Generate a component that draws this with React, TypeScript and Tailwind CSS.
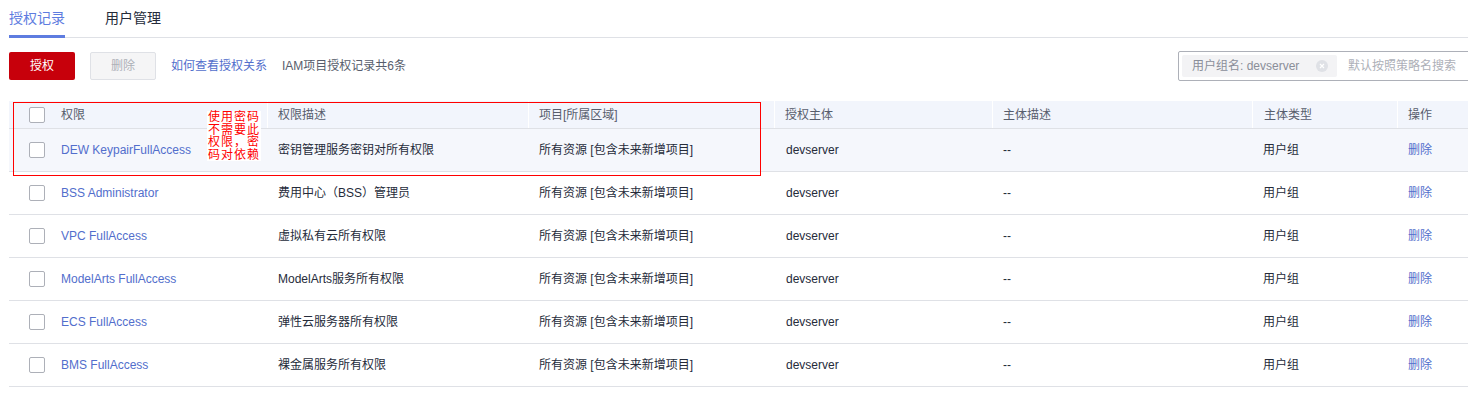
import React from "react";

const rows = [
  { name: "DEW KeypairFullAccess", desc: "密钥管理服务密钥对所有权限" },
  { name: "BSS Administrator", desc: "费用中心（BSS）管理员" },
  { name: "VPC FullAccess", desc: "虚拟私有云所有权限" },
  { name: "ModelArts FullAccess", desc: "ModelArts服务所有权限" },
  { name: "ECS FullAccess", desc: "弹性云服务器所有权限" },
  { name: "BMS FullAccess", desc: "裸金属服务所有权限" },
];

const cols = "grid grid-cols-[40px_218px_261px_246px_218px_260px_145px_1fr]";

const Checkbox = () => (
  <span className="block h-4 w-4 rounded-[2px] border border-[#adb0b8] bg-white" />
);

const App: React.FC = () => {
  return (
    <div
      className="w-full overflow-hidden bg-white"
      style={{ fontFamily: '"Liberation Sans", "Noto Sans CJK SC", sans-serif' }}
    >
      <div className="w-[1480px] pl-[9px]">
        {/* tabs */}
        <div className="flex h-[38px] border-b border-[#dfe1e6] text-[14px]">
          <div className="flex w-[56px] flex-col justify-between border-b-[3px] border-[#5e7ce0] pt-[9px] text-[#5e7ce0] -mb-px">
            <span className="leading-[18px]">授权记录</span>
          </div>
          <div className="ml-[40px] pt-[9px] leading-[18px] text-[#252b3a]">用户管理</div>
        </div>

        {/* toolbar */}
        <div className="mt-[13px] flex items-center text-[12px]">
          <button className="h-[28px] w-[66px] rounded-[2px] bg-[#c7000b] text-[12px] text-white">
            授权
          </button>
          <button className="ml-[15px] h-[28px] w-[66px] rounded-[2px] border border-[#dfe1e6] bg-[#f5f5f6] text-[12px] text-[#adb0b8]">
            删除
          </button>
          <a className="ml-[15px] text-[#526ecc]">如何查看授权关系</a>
          <span className="ml-[15px] text-[#575d6c]">IAM项目授权记录共6条</span>
          <div className="ml-auto flex h-[30px] w-[302px] items-center rounded-[2px] border border-[#adb0b8] bg-white pl-[3px]">
            <div className="flex h-[22px] w-[155px] items-center justify-between rounded-[2px] bg-[#f3f3f5] pl-[10px] pr-[9px] text-[#8a8e99]">
              <span>用户组名: devserver</span>
              <span className="flex h-[12px] w-[12px] items-center justify-center rounded-full bg-[#dfe1e6]">
                <svg width="6" height="6" viewBox="0 0 6 6">
                  <path d="M1 1L5 5M5 1L1 5" stroke="#fff" strokeWidth="1.2" />
                </svg>
              </span>
            </div>
            <span className="ml-[11px] text-[#adb0b8]">默认按照策略名搜索</span>
          </div>
        </div>

        {/* table */}
        <div className="relative mt-[20px] text-[12px] text-[#252b3a]">
          <div className={`${cols} h-[28px] items-stretch border-b border-[#dfe1e6] bg-[#f2f5fc] text-[#575d6c]`}>
            <div className="flex items-center pl-[20px]">
              <Checkbox />
            </div>
            <div className="flex items-center pl-[12px]">权限</div>
            <div className="flex items-center border-l border-white pl-[10px]">权限描述</div>
            <div className="flex items-center border-l border-white pl-[10px]">项目[所属区域]</div>
            <div className="flex items-center border-l border-white pl-[10px]">授权主体</div>
            <div className="flex items-center border-l border-white pl-[10px]">主体描述</div>
            <div className="flex items-center border-l border-white pl-[11px]">主体类型</div>
            <div className="flex items-center border-l border-white pl-[10px]">操作</div>
          </div>
          {rows.map((r, i) => (
            <div
              key={r.name}
              className={`${cols} h-[43px] items-center border-b border-[#dfe1e6] ${i === 0 ? "bg-[#f5f7fc]" : "bg-white"}`}
            >
              <div className="pl-[20px]">
                <Checkbox />
              </div>
              <div className="pl-[12px] text-[#526ecc]">{r.name}</div>
              <div className="pl-[11px]">{r.desc}</div>
              <div className="pl-[11px]">所有资源 [包含未来新增项目]</div>
              <div className="pl-[12px]">devserver</div>
              <div className="pl-[11px]">--</div>
              <div className="pl-[11px]">用户组</div>
              <div className="pl-[11px] text-[#526ecc]">删除</div>
            </div>
          ))}

          {/* annotation overlay */}
          <div className="pointer-events-none absolute left-[4px] top-[1px] h-[74px] w-[748px] border border-[#ff0000]" />
          <div className="absolute left-[198px] top-[10px] bg-white px-[1px] text-[12px] leading-[12.5px] tracking-[1px] text-[#ff0000]">
            使用密码
            <br />
            不需要此
            <br />
            权限，密
            <br />
            码对依赖
          </div>
        </div>
      </div>
    </div>
  );
};

export default App;
